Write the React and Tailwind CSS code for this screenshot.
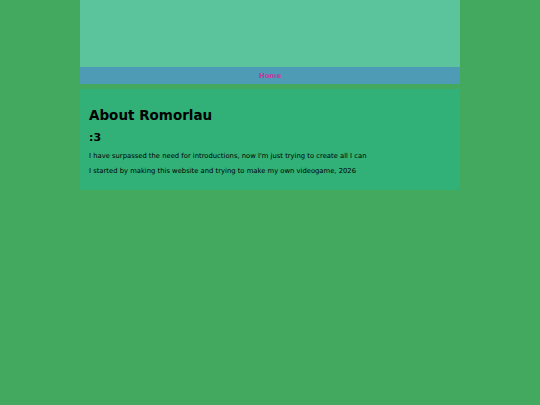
export default function App() {
  return (
    <div className="min-h-[405px] bg-[#42a95e] font-['DejaVu_Sans',Verdana,sans-serif]">
      <div className="mx-auto w-[380px]">
        <header className="h-[67px] bg-[#5bc49c]" />
        <nav className="flex h-[17px] items-center justify-center bg-[#4d9bb5] pt-[1px]">
          <a href="#" className="text-[6.8px] font-bold text-[#c2389f]">Home</a>
        </nav>
        <main className="mt-[5px] bg-[#31b078] px-[9px] pt-[16px] pb-[14px] text-black">
          <h1 className="text-[13.5px] font-bold leading-[20px]">About Romorlau</h1>
          <h2 className="mt-[6px] text-[11px] font-bold leading-[14px]">:3</h2>
          <p className="mt-[6px] text-[6.8px] leading-[10px]">I have surpassed the need for introductions, now I'm just trying to create all I can</p>
          <p className="mt-[5px] text-[6.8px] leading-[10px]">I started by making this website and trying to make my own videogame, 2026</p>
        </main>
      </div>
    </div>
  );
}
